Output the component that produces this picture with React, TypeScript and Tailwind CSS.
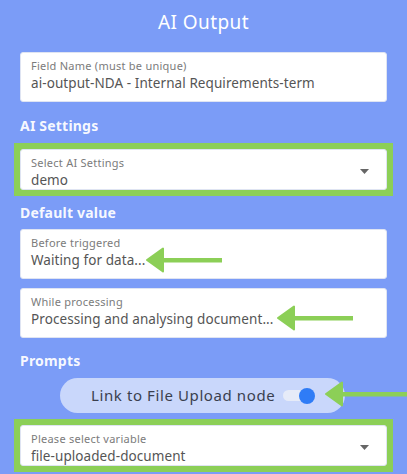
import React from 'react';

const font = { fontFamily: '"Noto Sans", "Open Sans", sans-serif' };

const Arrow: React.FC<{ className: string; width: number }> = ({ className, width }) => (
    <svg className={`absolute ${className}`} width={width} height={26} viewBox={`0 0 ${width} 26`}>
        <rect x={14} y={11} width={width - 14} height={4.5} fill="#8ccf57" />
        <path d="M1 13 L17 1.5 L17 24.5 Z" fill="#8ccf57" stroke="#8ccf57" strokeWidth={2} strokeLinejoin="round" />
    </svg>
);

const Caret = () => (
    <svg className="absolute right-[17px] top-[19px]" width={9} height={5} viewBox="0 0 9 5">
        <path d="M0 0 L9 0 L4.5 5 Z" fill="#666" />
    </svg>
);

const Field: React.FC<{ label: string; value: string; select?: boolean; h?: string }> = ({ label, value, select, h = 'h-[50px]' }) => (
    <div className={`relative bg-white rounded-[3px] border border-[#dfe4f2] ${h} px-[10px] pt-[6px]`}>
        <div className="text-[11px] leading-[14px] text-[#7b7b7b] tracking-[0.25px]">{label}</div>
        <div className="text-[13.5px] leading-[20px] text-[#555] tracking-[0.08px]">{value}</div>
        {select && <Caret />}
    </div>
);

const Heading: React.FC<{ children: React.ReactNode; className?: string }> = ({ children, className }) => (
    <h3 className={`text-[14px] font-bold text-white/95 tracking-[0.2px] ${className ?? ''}`}>{children}</h3>
);

export default function App() {
    return (
        <div className="relative w-[407px] h-[474px] overflow-hidden bg-[#7b9cf7] px-[20px]" style={font}>
            <h1 className="text-center text-white text-[19px] tracking-[0.4px] pt-[10px] leading-[24px] h-[52px]">AI Output</h1>
            <Field label="Field Name (must be unique)" value="ai-output-NDA - Internal Requirements-term" />
            <Heading className="mt-[14px] leading-[20px]">AI Settings</Heading>
            <div className="-mx-[6px] mt-[7px] border-[6px] border-[#8ccf57] bg-[#8ccf57]">
                <Field label="Select AI Settings" value="demo" select h="h-[41px]" />
            </div>
            <Heading className="mt-[7px] leading-[20px]">Default value</Heading>
            <div className="mt-[6px] flex flex-col gap-[9px]">
                <Field label="Before triggered" value="Waiting for data..." />
                <Field label="While processing" value="Processing and analysing document..." />
            </div>
            <Heading className="mt-[13px] leading-[20px]">Prompts</Heading>
            <div className="mt-[7px] ml-[40px] w-[285px] h-[35px] rounded-full bg-[#c9d7fb] flex items-center pl-[31px] gap-[8px]">
                <span className="text-[15px] text-[#3a3f4e] tracking-[0.6px]">Link to File Upload node</span>
                <span className="relative w-[32px] h-[15px] flex items-center">
                    <span className="w-[28px] h-[11px] rounded-full bg-[#e6ebf8]" />
                    <span className="absolute right-0 w-[16px] h-[16px] rounded-full bg-[#2f7cf6]" />
                </span>
            </div>
            <div className="-mx-[6px] mt-[6px] border-[6px] border-[#8ccf57] bg-[#8ccf57]">
                <Field label="Please select variable" value="file-uploaded-document" select h="h-[41px]" />
            </div>

            <Arrow className="left-[146px] top-[247px]" width={76} />
            <Arrow className="left-[277px] top-[305px]" width={76} />
            <Arrow className="left-[325px] top-[381px]" width={82} />
        </div>
    );
}
